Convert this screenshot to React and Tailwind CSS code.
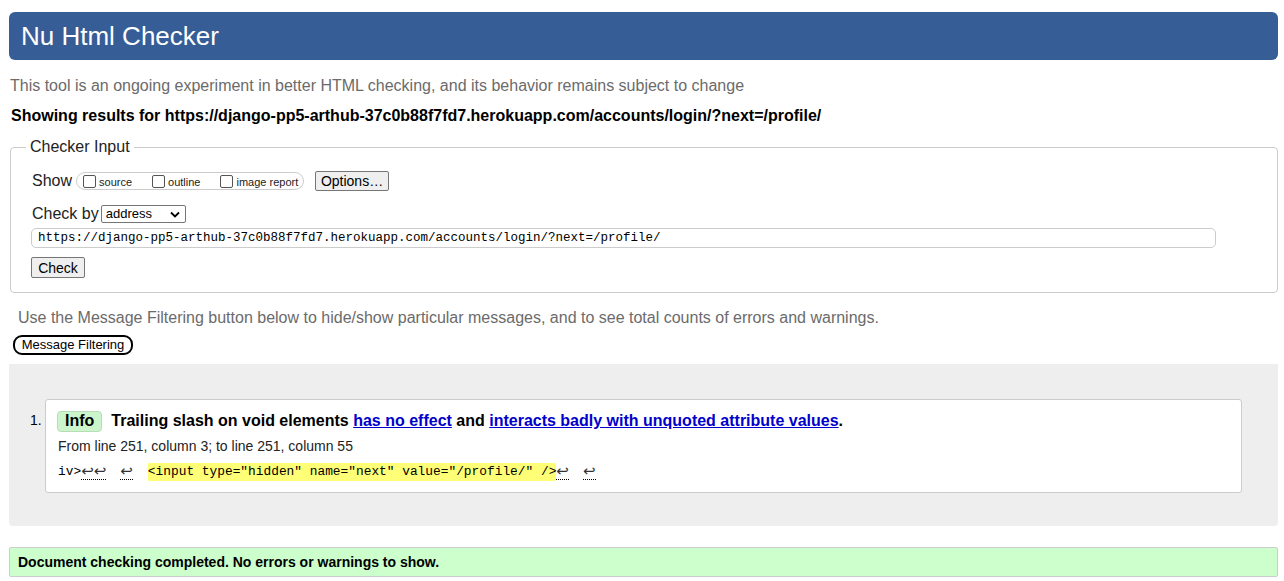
export default function App() {
  const arrow = "\u21A9";
  const arrowFont = { fontFamily: '"DejaVu Sans", sans-serif' };
  return (
    <div className="w-[1284px] h-[581px] bg-white overflow-hidden text-black" style={{ fontFamily: '"Liberation Sans", Arial, sans-serif' }}>
      <div className="ml-[9px] w-[1269px] flex flex-col">
        <div className="mt-[12px] h-[48px] bg-[#365d96] rounded-[6px] flex items-center pl-[12px]">
          <h1 className="text-[26px] text-white leading-none">Nu Html Checker</h1>
        </div>
        <p className="mt-[16px] h-[20px] leading-[20px] text-[16px] text-[#6b6b6b] pl-[1px]">This tool is an ongoing experiment in better HTML checking, and its behavior remains subject to change</p>
        <p className="mt-[10px] h-[20px] leading-[20px] text-[16px] font-bold pl-[2px]">Showing results for https://django-pp5-arthub-37c0b88f7fd7.herokuapp.com/accounts/login/?next=/profile/</p>

        <fieldset className="mt-[11px] ml-[1px] border border-[#cccccc] rounded-[4px] pl-[21px] pr-[6px] pb-[14px] h-[156px]">
          <legend className="px-[4px] ml-[-6px] text-[16px] text-[#222] leading-[20px]">Checker Input</legend>
          <div className="flex items-center h-[22px] mt-[13px]">
            <span className="text-[16px] text-[#222]">Show</span>
            <div className="ml-[4px] h-[18px] w-[228px] border border-[#cccccc] rounded-full flex items-center pl-[6px] text-[11px] text-[#222]">
              <span className="w-[13px] h-[13px] border border-[#555] rounded-[2px] bg-white"></span>
              <span className="ml-[3px] mt-[2px]">source</span>
              <span className="ml-[20px] w-[13px] h-[13px] border border-[#555] rounded-[2px] bg-white"></span>
              <span className="ml-[3px] mt-[2px]">outline</span>
              <span className="ml-[20px] w-[13px] h-[13px] border border-[#555] rounded-[2px] bg-white"></span>
              <span className="ml-[3px] mt-[2px]">image report</span>
            </div>
            <button className="ml-[11px] h-[20px] w-[74px] border border-[#767676] rounded-[2px] bg-[#efefef] text-[14px] text-black leading-none">Options…</button>
          </div>
          <div className="flex items-center h-[22px] mt-[11px]">
            <span className="text-[16px] text-[#222]">Check by</span>
            <div className="ml-[2px] h-[18px] w-[85px] border border-[#767676] rounded-[2px] flex items-center justify-between pl-[4px] pr-[5px] text-[13px]">
              <span>address</span>
              <svg width="10" height="7" viewBox="0 0 10 7"><path d="M1 1.5 L5 5.5 L9 1.5" fill="none" stroke="#000" strokeWidth="1.8" /></svg>
            </div>
          </div>
          <div className="mt-[3px] h-[20px] w-[1185px] ml-[-1px] border border-[#cccccc] rounded-[5px] flex items-center pl-[6px] text-[12.5px]" style={{ fontFamily: '"Liberation Mono", "DejaVu Sans Mono", monospace' }}>
            https://django-pp5-arthub-37c0b88f7fd7.herokuapp.com/accounts/login/?next=/profile/
          </div>
          <button className="mt-[9px] ml-[-1px] h-[21px] w-[54px] border border-[#767676] rounded-[2px] bg-[#efefef] text-[14px] leading-none">Check</button>
        </fieldset>

        <p className="mt-[15px] h-[20px] leading-[20px] text-[16px] text-[#6b6b6b] pl-[9px]">Use the Message Filtering button below to hide/show particular messages, and to see total counts of errors and warnings.</p>
        <div className="mt-[4px] pl-[4px]">
          <button className="h-[20px] w-[120px] border-2 border-black rounded-[9px] bg-white text-[13px] leading-none">Message Filtering</button>
        </div>

        <div className="mt-[8px] h-[162px] bg-[#eeeeee] rounded-b-[4px] pt-[35px] px-[36px]">
          <div className="relative h-[94px] bg-white border border-[#cccccc] rounded-[3px] pl-[11px] pt-[10px]">
            <span className="absolute left-[-16px] top-[10px] text-[14px]">1.</span>
            <div className="flex items-center h-[22px]">
              <span className="h-[21px] px-[7px] bg-[#ccf5cc] border border-[#b7ddb7] rounded-[4px] text-[16px] font-bold flex items-center">Info</span>
              <span className="ml-[9px] text-[16px] font-bold">
                Trailing slash on void elements <a className="text-[#0000cc] underline">has no effect</a> and <a className="text-[#0000cc] underline">interacts badly with unquoted attribute values</a>.
              </span>
            </div>
            <p className="mt-[6px] text-[14px] leading-[16px] text-[#222] pl-[1px]">From line 251, column 3; to line 251, column 55</p>
            <div className="mt-[9px] pl-[1px] flex items-center text-[12.85px] leading-[18px] whitespace-pre" style={{ fontFamily: '"Liberation Mono", "DejaVu Sans Mono", monospace' }}>
              <span>iv&gt;</span>
              <span className="border-b border-dotted border-black leading-[15px] text-[15px] text-[#333]" style={arrowFont}>{arrow}{arrow}</span>
              <span className="ml-[14px] border-b border-dotted border-black leading-[15px] text-[15px] text-[#333]" style={arrowFont}>{arrow}</span>
              <span className="ml-[15px] bg-[#ffff77]">&lt;input type="hidden" name="next" value="/profile/" /&gt;</span>
              <span className="border-b border-dotted border-black leading-[15px] text-[15px] text-[#333]" style={arrowFont}>{arrow}</span>
              <span className="ml-[14px] border-b border-dotted border-black leading-[15px] text-[15px] text-[#333]" style={arrowFont}>{arrow}</span>
            </div>
          </div>
        </div>

        <div className="mt-[21px] h-[30px] bg-[#ccffcc] border border-[#cccccc] rounded-[2px] flex items-center pl-[8px] text-[14px] font-bold">
          Document checking completed. No errors or warnings to show.
        </div>
      </div>
    </div>
  );
}
